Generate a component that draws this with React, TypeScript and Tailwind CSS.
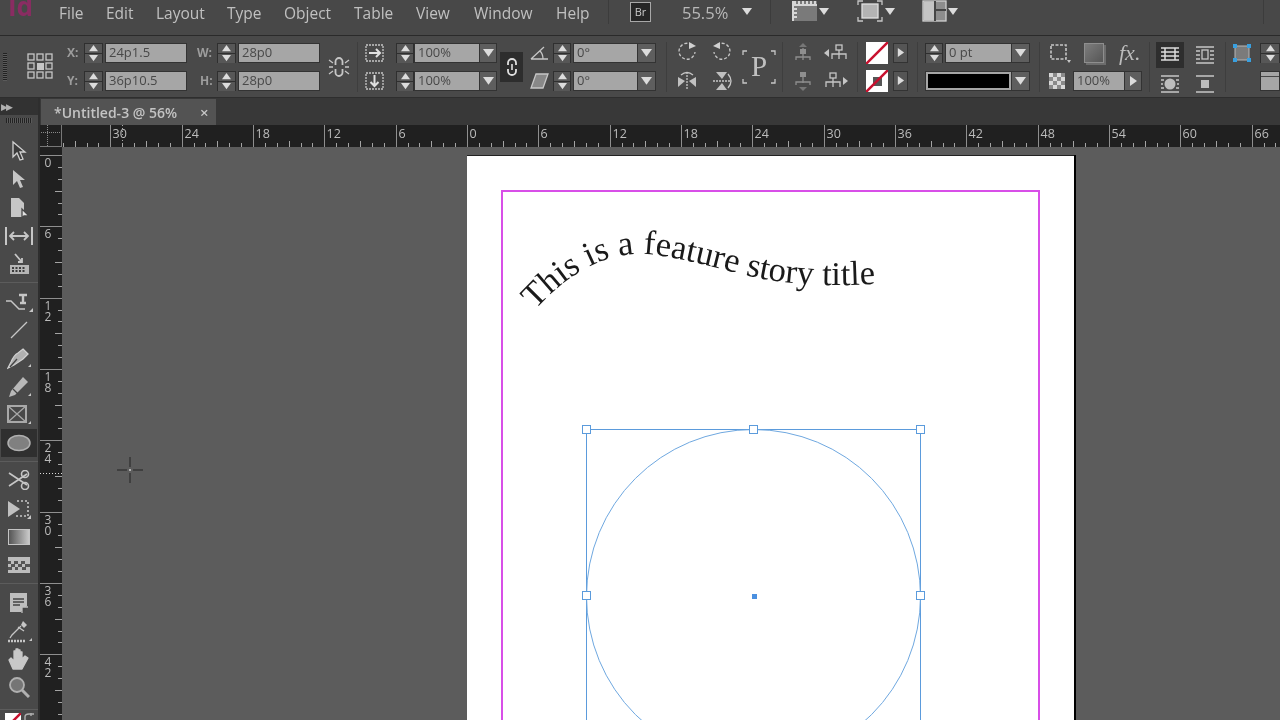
import React from 'react';

const ICON = '#c6c6c6';

const Tri = ({ dir = 'down', size = 10, color = '#dcdcdc' }: { dir?: string; size?: number; color?: string }) => {
  const pts = dir === 'down' ? '0,1 10,1 5,8' : dir === 'up' ? '0,8 10,8 5,1' : '2,0 9,5 2,10';
  return (
    <svg width={size} height={size} viewBox="0 0 10 10" className="block shrink-0">
      <polygon points={pts} fill={color} />
    </svg>
  );
};

const Spinner = ({ w = 'w-[19px]' }: { w?: string }) => (
  <div className={`${w} h-[20px] shrink-0 flex flex-col bg-[#2f2f2f] p-px gap-px`}>
    <div className="flex-1 bg-[#575757] flex items-center justify-center"><Tri dir="up" size={9} /></div>
    <div className="flex-1 bg-[#575757] flex items-center justify-center"><Tri size={9} /></div>
  </div>
);

const Field = ({ value, w }: { value: string; w: string }) => (
  <div className={`${w} h-[20px] shrink-0 bg-[#a6a6a6] border border-[#333] pl-[3px] text-[13px] leading-[17px] text-[#484848]`}>{value}</div>
);

const Drop = ({ w = 'w-[18px]' }: { w?: string }) => (
  <div className={`${w} h-[20px] shrink-0 bg-[#5e5e5e] border border-l-0 border-[#333] flex items-center justify-center`}><Tri size={11} /></div>
);

const Row = ({ children }: { children: React.ReactNode }) => <div className="flex items-center h-[20px]">{children}</div>;

const Segment = ({ className, children }: { className: string; children?: React.ReactNode }) => (
  <div className={`${className} shrink-0 flex flex-col justify-center gap-[8px] h-[50px] pt-[1px]`}>{children}</div>
);

const Ico = ({ w = 20, h = 20, className = '', children }: { w?: number; h?: number; className?: string; children: React.ReactNode }) => (
  <svg width={w} height={h} viewBox={`0 0 ${w} ${h}`} className={`block shrink-0 ${className}`} fill="none" stroke={ICON} strokeWidth="1.3">
    {children}
  </svg>
);

const MENU: [string, string][] = [
  ['File', 'w-[47px]'],
  ['Edit', 'w-[50px]'],
  ['Layout', 'w-[71px]'],
  ['Type', 'w-[57px]'],
  ['Object', 'w-[70px]'],
  ['Table', 'w-[62px]'],
  ['View', 'w-[58px]'],
  ['Window', 'w-[82px]'],
  ['Help', 'w-[52px]'],
];

const MenuBar = () => (
  <div className="relative h-[36px] shrink-0 flex items-start pl-[59px] bg-[#484848] border-b border-[#2a2a2a] text-[15.5px] text-[#c0c0c0]">
    <span className="absolute left-[8px] top-[-9px] text-[26px] font-bold leading-[30px] text-[#8a2c62]">Id</span>
    {MENU.map(([label, w]) => (
      <span key={label} className={`${w} leading-[26px] shrink-0`}>{label}</span>
    ))}
    <div className="w-px h-[24px] bg-[#3c3c3c]" />
    <div className="ml-[21px] mt-[2px] w-[21px] h-[20px] bg-[#262626] border border-[#a8a8a8] text-[11px] leading-[18px] text-center text-[#c8c8c8]">Br</div>
    <span className="ml-[31px] w-[48px] text-[16.5px] leading-[25px] text-[#b8b8b8]">55.5%</span>
    <div className="ml-[12px] mt-[7px]"><Tri size={10} /></div>
    <div className="ml-[18px] w-px h-[24px] bg-[#3c3c3c]" />
    <Ico w={26} h={22} className="ml-[21px]">
      <rect x="1" y="1" width="24" height="20" fill="#7a7a7a" stroke="none" />
      <path d="M1 5H25M1 1V21M3 1V5M7 1V5M11 1V5M15 1V5M19 1V5M23 1V5M1 9H5M1 13H5M1 17H5" stroke="#d6d6d6" strokeWidth="2" />
    </Ico>
    <div className="ml-[1px] mt-[7px]"><Tri size={10} /></div>
    <Ico w={26} h={22} className="ml-[28px]">
      <rect x="5" y="4" width="16" height="14" fill="#b4b4b4" stroke="#e0e0e0" />
      <path d="M1 5V1H6M20 1H25V5M25 17V21H20M6 21H1V17" />
    </Ico>
    <div className="ml-[2px] mt-[7px]"><Tri size={10} /></div>
    <Ico w={25} h={22} className="ml-[27px]">
      <rect x="1" y="1" width="23" height="20" fill="#8d8d8d" stroke="#d0d0d0" />
      <path d="M13 1V21M13 10H24" stroke="#454545" strokeWidth="2" />
      <rect x="2" y="2" width="10" height="18" fill="#c4c4c4" stroke="none" />
    </Ico>
    <div className="ml-[1px] mt-[7px]"><Tri size={10} /></div>
    <div className="ml-[305px] w-px h-[24px] bg-[#3c3c3c]" />
  </div>
);

const ControlBar = () => (
  <div className="h-[62px] shrink-0 flex items-center bg-[#494949] border-b border-[#2e2e2e] text-[#9d9d9d] text-[13px]">
    <div className="w-[60px] shrink-0 flex items-center pl-[3px]">
      <div className="w-[4px] h-[28px] bg-[repeating-linear-gradient(to_bottom,#222_0,#222_1px,#5a5a5a_1px,#5a5a5a_2px)]" />
      <Ico w={27} h={27} className="ml-[20px]">
        {[1, 10, 19].map((y) =>
          [1, 10, 19].map((x) =>
            x === 10 && y === 10 ? (
              <rect key={`${x}${y}`} x={x} y={y} width="7" height="7" fill="#c6c6c6" stroke="none" />
            ) : (
              <rect key={`${x}${y}`} x={x} y={y} width="6" height="6" />
            ),
          ),
        )}
      </Ico>
    </div>
    <Segment className="w-[127px]">
      <Row><span className="w-[24px] pl-[7px] font-bold text-[12px]">X:</span><Spinner /><div className="w-[2px]" /><Field value="24p1.5" w="w-[82px]" /></Row>
      <Row><span className="w-[24px] pl-[7px] font-bold text-[12px]">Y:</span><Spinner /><div className="w-[2px]" /><Field value="36p10.5" w="w-[82px]" /></Row>
    </Segment>
    <Segment className="w-[133px]">
      <Row><span className="w-[30px] pl-[10px] font-bold text-[12px]">W:</span><Spinner /><div className="w-[2px]" /><Field value="28p0" w="w-[82px]" /></Row>
      <Row><span className="w-[30px] pl-[13px] font-bold text-[12px]">H:</span><Spinner /><div className="w-[2px]" /><Field value="28p0" w="w-[82px]" /></Row>
    </Segment>
    <div className="w-[38px] h-[50px] shrink-0 flex items-center justify-center border-r border-[#3e3e3e]">
      <Ico w={22} h={22}>
        <path d="M7.5 9V5.5A3.5 3.5 0 0 1 14.5 5.5V9M7.5 13V16.5A3.5 3.5 0 0 0 14.5 16.5V13" strokeWidth="1.8" />
        <path d="M1 4L5 7M1 11H5M1 18L5 15M21 4L17 7M21 11H17M21 18L17 15" />
      </Ico>
    </div>
    <Segment className="w-[134px]">
      <Row>
        <Ico w={20} h={20} className="mr-[11px] ml-[7px]"><rect x="1" y="2" width="17" height="16" strokeDasharray="2 1" /><path d="M4 10H14M11 6L15 10L11 14" strokeWidth="2" stroke="#e0e0e0" /></Ico>
        <Spinner w="w-[18px]" /><div className="w-[2px]" /><Field value="100%" w="w-[66px]" /><Drop w="w-[17px]" />
      </Row>
      <Row>
        <Ico w={20} h={20} className="mr-[11px] ml-[7px]"><rect x="1" y="2" width="17" height="16" strokeDasharray="2 1" /><path d="M9.5 4V15M5.5 11L9.5 15L13.5 11" strokeWidth="2" stroke="#e0e0e0" /></Ico>
        <Spinner w="w-[18px]" /><div className="w-[2px]" /><Field value="100%" w="w-[66px]" /><Drop w="w-[17px]" />
      </Row>
    </Segment>
    <div className="w-[38px] shrink-0 pl-[8px]">
      <div className="w-[23px] h-[30px] bg-[#2d2d2d] flex items-center justify-center">
        <Ico w={12} h={20}><path d="M2 8V6A4 4 0 0 1 10 6V8M2 12V14A4 4 0 0 0 10 14V12" stroke="#e0e0e0" strokeWidth="1.8" /><path d="M6 7V13" stroke="#e0e0e0" strokeWidth="1.6" /></Ico>
      </div>
    </div>
    <Segment className="w-[126px]">
      <Row>
        <Ico w={19} h={16} className="mr-[4px]"><path d="M1 14H18M1 14L14 2M10 6Q13 9 13 14" /></Ico>
        <Spinner w="w-[18px]" /><div className="w-[2px]" /><Field value="0°" w="w-[65px]" /><Drop />
      </Row>
      <Row>
        <Ico w={19} h={16} className="mr-[4px]"><path d="M6 1H18L13 15H1Z" fill="#888" /></Ico>
        <Spinner w="w-[18px]" /><div className="w-[2px]" /><Field value="0°" w="w-[65px]" /><Drop />
      </Row>
    </Segment>
    <div className="w-[11px] h-[50px] shrink-0 border-r border-[#3e3e3e]" />
    <div className="w-[115px] h-[56px] shrink-0 flex items-center pl-[10px]">
      <div className="grid grid-cols-2 gap-x-[15px] gap-y-[9px]">
        <Ico><path d="M15 3A8 8 0 1 0 18 10" strokeDasharray="3 2" /><polygon points="12,0 19,4 12,7" fill="#d0d0d0" stroke="none" /></Ico>
        <Ico><path d="M5 3A8 8 0 1 1 2 10" strokeDasharray="3 2" /><polygon points="8,0 1,4 8,7" fill="#d0d0d0" stroke="none" /></Ico>
        <Ico><path d="M10 1V19" strokeDasharray="2 1" /><polygon points="1,6 8,10 1,16" fill="#c0c0c0" stroke="none" /><polygon points="19,6 12,10 19,16" fill="#c0c0c0" stroke="none" /><path d="M4 4Q10 -1 16 4" /></Ico>
        <Ico><path d="M1 10H19" strokeDasharray="2 1" /><polygon points="4,1 15,1 10,8" fill="#c0c0c0" stroke="none" /><polygon points="4,19 15,19 10,12" fill="#c0c0c0" stroke="none" /><path d="M16 3Q22 10 16 17" /></Ico>
      </div>
      <div className="relative ml-[10px] w-[34px] h-[36px] flex items-center justify-center">
        <Ico w={34} h={36} className="absolute inset-0"><path d="M1 6V2H5M29 2H33V6M33 30V34H29M5 34H1V30" /></Ico>
        <span className="font-['Liberation_Serif',serif] text-[29px] leading-none text-[#c0c0c0]">P</span>
      </div>
    </div>
    <div className="w-[76px] h-[50px] shrink-0 flex items-center pl-[10px] border-l border-r border-[#3e3e3e]">
      <div className="grid grid-cols-[20px_26px] gap-x-[10px] gap-y-[8px]">
        <Ico><polygon points="10,0 14,4 6,4" fill="#777" stroke="none" /><path d="M10 5V14M3 17V14H17V17M10 14V17" stroke="#8f8f8f" /><rect x="7" y="6" width="6" height="5" fill="#8f8f8f" stroke="none" /></Ico>
        <Ico w={26}><polygon points="1,10 6,6 6,14" fill="#c6c6c6" stroke="none" /><path d="M16 7V11M9 16V11H23V16M16 11V16" /><rect x="13" y="2" width="6" height="5" /></Ico>
        <Ico><polygon points="10,20 14,16 6,16" fill="#777" stroke="none" /><path d="M10 4V12M3 14V11H17V14" stroke="#8f8f8f" /><rect x="7" y="1" width="6" height="5" fill="#8f8f8f" stroke="none" /></Ico>
        <Ico w={26}><polygon points="25,10 20,6 20,14" fill="#c6c6c6" stroke="none" /><path d="M10 7V11M3 16V11H17V16M10 11V16" /><rect x="7" y="2" width="6" height="5" /></Ico>
      </div>
    </div>
    <div className="w-[60px] h-[50px] shrink-0 flex flex-col justify-center gap-[6px] pl-[8px] border-r border-[#3e3e3e]">
      {[0, 1].map((i) => (
        <div key={i} className="flex items-center">
          <svg width="22" height="22" viewBox="0 0 22 22" className="block shrink-0">
            <rect width="22" height="22" fill="#ffffff" />
            {i === 1 && <rect x="7" y="7" width="9" height="9" fill="#555" />}
            <path d="M0 22L22 0" stroke="#c8102e" strokeWidth="2.5" />
          </svg>
          <div className="ml-[5px] w-[15px] h-[20px] bg-[#555] border border-[#333] flex items-center justify-center"><Tri dir="right" size={9} /></div>
        </div>
      ))}
    </div>
    <Segment className="w-[122px] pl-[7px] border-r border-[#3e3e3e]">
      <Row><Spinner w="w-[18px]" /><div className="w-[2px]" /><Field value="0 pt" w="w-[67px]" /><Drop /></Row>
      <Row>
        <div className="w-[87px] h-[20px] bg-[#a6a6a6] border border-[#333] p-[2px]"><div className="h-full w-[81px] bg-black" /></div>
        <Drop />
      </Row>
    </Segment>
    <div className="w-[110px] h-[50px] shrink-0 flex flex-col justify-center gap-[8px] pl-[9px] border-r border-[#3e3e3e]">
      <div className="flex items-center h-[20px]">
        <Ico w={22} h={20}><rect x="2" y="2" width="15" height="14" strokeDasharray="3 1.5" strokeWidth="1.6" /><polygon points="18,17 22,17 20,20" fill="#c6c6c6" stroke="none" /></Ico>
        <div className="ml-[13px] w-[20px] h-[20px] bg-[linear-gradient(135deg,#7d7d7d,#565656)] border border-[#8e8e8e] shadow-[2px_2px_0_#6c6c6c]" />
        <span className="ml-[15px] font-['Liberation_Serif',serif] italic text-[22px] leading-none text-[#bcbcbc]">fx.</span>
      </div>
      <div className="flex items-center h-[20px]">
        <svg width="16" height="16" viewBox="0 0 4 4" className="block shrink-0">
          <rect width="4" height="4" fill="#d8d8d8" />
          <path d="M1 0H2V1H1ZM3 0H4V1H3ZM0 1H1V2H0ZM2 1H3V2H2ZM1 2H2V3H1ZM3 2H4V3H3ZM0 3H1V4H0ZM2 3H3V4H2Z" fill="#8a8a8a" />
        </svg>
        <div className="ml-[8px] w-[52px] h-[20px] bg-[#a6a6a6] border border-[#333] pl-[3px] text-[13px] leading-[17px] text-[#484848]">100%</div>
        <div className="w-[17px] h-[20px] bg-[#5e5e5e] border border-l-0 border-[#333] flex items-center justify-center"><Tri dir="right" size={10} /></div>
      </div>
    </div>
    <div className="w-[76px] h-[50px] shrink-0 grid grid-cols-[28px_20px] gap-x-[11px] gap-y-[7px] pl-[6px] items-center border-r border-[#3e3e3e]">
      <div className="h-[26px] bg-[#2e2e2e] flex items-center justify-center">
        <Ico w={20} h={18}><path d="M1 2H19M1 6H19M1 10H19M1 14H19M5 2V14M15 2V14" strokeWidth="1.5" stroke="#dcdcdc" /></Ico>
      </div>
      <Ico h={18}><path d="M1 1H19M1 17H19M1 5H5M1 9H5M1 13H5M15 5H19M15 9H19M15 13H19" /><rect x="7" y="4" width="6" height="9" /></Ico>
      <div className="flex justify-center">
        <Ico h={18}><path d="M1 1H19M1 17H19M1 5H4M1 9H3M1 13H4M16 5H19M17 9H19M16 13H19" /><circle cx="10" cy="9" r="5.5" fill="#bdbdbd" stroke="none" /></Ico>
      </div>
      <Ico h={18}><path d="M1 1H19M1 17H19" strokeWidth="1.6" /><rect x="6" y="5" width="8" height="8" fill="#bdbdbd" stroke="none" /></Ico>
    </div>
    <div className="flex-1 flex flex-col justify-center gap-[8px] pl-[6px]">
      <div className="flex items-center h-[20px]">
        <svg width="20" height="20" viewBox="0 0 20 20" className="block shrink-0">
          <rect x="3" y="3" width="14" height="14" fill="#7b7b7b" stroke="#b8b8b8" />
          {[[1, 1], [15, 1], [1, 15], [15, 15]].map(([x, y]) => <rect key={`${x}-${y}`} x={x} y={y} width="4" height="4" fill="#39a0e0" />)}
        </svg>
        <div className="ml-[8px]"><Spinner w="w-[20px]" /></div>
      </div>
      <div className="flex items-center h-[20px] pl-[28px]">
        <div className="w-[20px] h-[20px] bg-[#a6a6a6] border border-[#333] pt-[4px]"><div className="h-[1px] bg-[#484848]" /></div>
      </div>
    </div>
  </div>
);

const TOOLS: (React.ReactNode | null)[] = [
  <Ico w={18} h={22}><path d="M3 2V17L7 13L10 20L13 19L10 12H15Z" fill="#3a3a3a" stroke="#d0d0d0" /></Ico>,
  <Ico w={18} h={22}><path d="M3 2V17L7 13L10 20L13 19L10 12H15Z" fill="#c6c6c6" stroke="none" /></Ico>,
  <Ico w={20} h={22}><path d="M2 1H10L15 6V20H2Z" fill="#c6c6c6" stroke="none" /><path d="M13 12V21L15 19L20 19Z" fill="#e2e2e2" stroke="#484848" /></Ico>,
  <Ico w={28} h={20}><path d="M1 1V19M27 1V19" strokeWidth="2" /><path d="M5 10H23M9 6L5 10L9 14M19 6L23 10L19 14" strokeWidth="1.8" /></Ico>,
  <Ico w={24} h={24}><path d="M2 13H3V22H22V13" fill="#b5b5b5" stroke="none" /><path d="M5 16H19M5 19H19" stroke="#3c3c3c" strokeDasharray="2 1.5" strokeWidth="2" /><path d="M8 2L14 9M11 10H15V6" strokeWidth="1.8" /></Ico>,
  null,
  <Ico w={28} h={22}><path d="M1 10H6L14 18H20" strokeWidth="1.4" /><path d="M14 4H22M18 4V12M15 12H21" strokeWidth="2.4" /><polygon points="24,21 28,21 28,17" fill="#c6c6c6" stroke="none" /></Ico>,
  <Ico w={20} h={20}><path d="M2 18L18 2" /></Ico>,
  <Ico w={24} h={24}><path d="M16 3L21 8L16 13L7 19L1 22L4 16Q7 9 11 7Z" fill="#b0b0b0" stroke="#d0d0d0" /><path d="M3 21L10 13" stroke="#444" /><polygon points="21,21 24,21 24,18" fill="#c6c6c6" stroke="none" /></Ico>,
  <Ico w={24} h={24}><path d="M16 2L21 7L8 20L2 22L4 16Z" fill="#b8b8b8" stroke="none" /><path d="M6 14L12 20" stroke="#444" /><polygon points="21,21 24,21 24,18" fill="#c6c6c6" stroke="none" /></Ico>,
  <Ico w={24} h={22}><rect x="1" y="2" width="18" height="16" stroke="#a8a8a8" strokeWidth="2" /><path d="M1 2L19 18M19 2L1 18" stroke="#a8a8a8" /><polygon points="21,20 24,20 24,17" fill="#c6c6c6" stroke="none" /></Ico>,
  'ellipse',
  null,
  <Ico w={24} h={20}><path d="M2 3L20 15M2 16L20 4" strokeWidth="1.6" /><circle cx="18" cy="4" r="3.5" strokeWidth="1.6" /><circle cx="18" cy="16" r="3.5" strokeWidth="1.6" /></Ico>,
  <Ico w={24} h={22}><polygon points="1,3 1,19 13,11" fill="#c0c0c0" stroke="none" /><path d="M10 3H21V18H8" strokeDasharray="2 2" strokeWidth="1.6" /><polygon points="20,21 24,21 24,17" fill="#c6c6c6" stroke="none" /></Ico>,
  <div className="w-[22px] h-[16px] border border-[#c4c4c4] bg-[linear-gradient(to_right,#555,#c8c8c8)]" />,
  <svg width="22" height="16" viewBox="0 0 22 16" className="block shrink-0">
    <rect width="22" height="16" fill="#bcbcbc" />
    <path d="M0 4H3V7H0ZM6 4H10V7H6ZM13 4H17V7H13ZM0 10H4V13H0ZM7 10H10V13H7ZM14 10H18V13H14ZM3 7H7V10H3ZM10 7H14V10H10ZM17 7H22V10H17Z" fill="#555" />
  </svg>,
  null,
  <Ico w={20} h={22}><path d="M1 1H18V14L12 20H1Z" fill="#bdbdbd" stroke="none" /><path d="M4 7H15M4 10H15M4 13H11" stroke="#444" /><path d="M13 21V15H19" fill="#444" stroke="#bdbdbd" /></Ico>,
  <Ico w={26} h={24}><path d="M17 2L21 6L18 9L15 6Z" fill="#c6c6c6" stroke="none" /><path d="M15 7L6 16L4 19" /><path d="M12 8L18 12" /><path d="M2 22H20" stroke="#c6c6c6" strokeDasharray="2 1" strokeWidth="2.6" /><polygon points="23,22 26,22 26,19" fill="#c6c6c6" stroke="none" /></Ico>,
  <Ico w={24} h={24}><path d="M6 22L2 13L4 11L7 14V4H9V11V2H11V11V3H13V11V5H15V12L18 9L21 11L15 22Z" fill="#c8c8c8" stroke="#c8c8c8" strokeLinejoin="round" /></Ico>,
  <Ico w={22} h={22}><circle cx="9" cy="9" r="7" fill="#757575" stroke="#b0b0b0" strokeWidth="1.8" /><path d="M14 14L21 21" strokeWidth="3" stroke="#b0b0b0" /></Ico>,
];

const Tools = () => (
  <div className="w-[40px] shrink-0 h-full flex flex-col bg-[#494949] border-r-2 border-[#2e2e2e] overflow-hidden">
    <div className="h-[17px] shrink-0 bg-[#323232] flex items-center pl-[1px]">
      <span className="text-[9px] leading-none text-[#b0b0b0] tracking-[-2px]">▶▶</span>
    </div>
    <div className="h-[17px] shrink-0 flex justify-center pt-[3px]">
      <div className="w-[26px] h-[5px] bg-[repeating-linear-gradient(to_right,#222_0,#222_1px,#5a5a5a_1px,#5a5a5a_2px)]" />
    </div>
    <div className="h-[5px] shrink-0" />
    {TOOLS.map((tool, i) =>
      tool === null ? (
        <div key={i} className="h-[1px] shrink-0 my-[4px] bg-[#5c5c5c]" />
      ) : tool === 'ellipse' ? (
        <div key={i} className="h-[28.3px] shrink-0 flex items-center justify-center mx-[1px] bg-[#2f2f2f]">
          <svg width="24" height="18" viewBox="0 0 24 18" className="block">
            <ellipse cx="12" cy="9" rx="11" ry="7.5" fill="#808080" stroke="#b0b0b0" strokeWidth="1.5" />
          </svg>
        </div>
      ) : (
        <div key={i} className="h-[28.3px] shrink-0 flex items-center justify-center">{tool}</div>
      ),
    )}
    <div className="mt-[7px] h-px shrink-0 bg-[#5c5c5c]" />
    <div className="flex pl-[5px] pt-[3px]">
      <svg width="16" height="16" viewBox="0 0 16 16" className="block shrink-0">
        <rect width="16" height="16" fill="#ffffff" />
        <path d="M0 16L16 0" stroke="#c8102e" strokeWidth="2.5" />
      </svg>
      <svg width="12" height="10" viewBox="0 0 12 10" className="block shrink-0 ml-[2px]"><path d="M2 9V4Q2 1 6 1H11M8 0V3" fill="none" stroke="#b0b0b0" strokeWidth="1.4" /></svg>
    </div>
  </div>
);

const UNIT = 71.33 / 6;
const HTICKS = Array.from({ length: 106 }, (_, i) => i - 34);

const HRuler = () => (
  <div className="h-[22px] shrink-0 flex bg-[#202020]">
    <div className="w-[22px] h-[22px] shrink-0 relative border-r border-b border-[#777]">
      <div className="absolute left-[1px] right-[1px] top-[7px] border-t border-dotted border-[#8a8a8a]" />
      <div className="absolute top-0 bottom-0 left-[7px] border-l border-dotted border-[#8a8a8a]" />
    </div>
    <svg width="1218" height="22" viewBox="0 0 1218 22" className="block shrink-0">
      {HTICKS.map((u) => {
        const x = Math.round(405 + u * UNIT) + 0.5;
        if (u % 6 === 0) {
          return (
            <g key={u}>
              <path d={`M${x} 0V22`} stroke="#8f8f8f" />
              <text x={x + 2} y="13" fontSize="12.5" fill="#bcbcbc" fontFamily="'Open Sans', sans-serif">{Math.abs(u)}</text>
            </g>
          );
        }
        return <path key={u} d={`M${x} ${u % 3 === 0 ? 16 : 18}V22`} stroke="#a4a4a4" />;
      })}
      <path d="M60.5 0V22" stroke="#a8a8a8" strokeDasharray="1 2" />
    </svg>
  </div>
);

const VTICKS = Array.from({ length: 48 }, (_, i) => i);

const VRuler = () => (
  <svg width="22" height="573" viewBox="0 0 22 573" className="block shrink-0 bg-[#202020]">
    {VTICKS.map((u) => {
      const y = Math.round(8 + u * UNIT) + 0.5;
      if (u % 6 === 0) {
        return (
          <g key={u}>
            <path d={`M0 ${y}H22`} stroke="#8f8f8f" />
            <text
              x="8"
              y={y - 2}
              fontSize="12"
              letterSpacing="-6"
              fill="#bcbcbc"
              fontFamily="'Open Sans', sans-serif"
              style={{ writingMode: 'vertical-rl', textOrientation: 'upright' }}
            >
              {u}
            </text>
          </g>
        );
      }
      return <path key={u} d={`M${u % 3 === 0 ? 15 : 18} ${y}H22`} stroke="#a4a4a4" />;
    })}
    <path d="M0 326.5H22" stroke="#dcdcdc" strokeDasharray="1 2" />
  </svg>
);

const Handle = ({ className }: { className: string }) => (
  <div className={`absolute w-[9px] h-[9px] bg-white border border-[#5b9bdc] ${className}`} />
);

const Page = () => (
  <div className="relative ml-[405px] mt-[8px] w-[607px] h-[600px] shrink-0 bg-white border-t border-[#222] shadow-[2px_0_0_#000]">
    {/* margin guides */}
    <div className="absolute left-[34px] top-[34px] w-[539px] h-[600px] border-2 border-[#d84fe8] border-b-0" />
    {/* curved headline */}
    <svg width="440" height="120" viewBox="0 0 440 120" className="absolute left-[52px] top-[55px] overflow-visible">
      <path id="headline" d="M16 99 C 55 56, 95 38, 136 44 C 180 50, 220 64, 250 69 S 330 78, 400 68" fill="none" />
      <text fontFamily="'Liberation Serif', serif" fontSize="34.5" fill="#1a1a1a">
        <textPath href="#headline">This is a feature story title</textPath>
      </text>
    </svg>
    {/* selected ellipse frame */}
    <div className="absolute left-[119px] top-[273px] w-[335px] h-[340px] border border-[#5b9bdc]">
      <div className="absolute left-[-1px] top-[-1px] w-[335px] h-[335px] rounded-full border border-[#6fa8e0]" />
      <Handle className="left-[-5px] top-[-5px]" />
      <Handle className="left-[162px] top-[-5px]" />
      <Handle className="right-[-5px] top-[-5px]" />
      <Handle className="left-[-5px] top-[161px]" />
      <Handle className="right-[-5px] top-[161px]" />
      <div className="absolute left-[165px] top-[164px] w-[5px] h-[5px] bg-[#4a90e0]" />
    </div>
  </div>
);

export default function App() {
  return (
    <div className="w-[1280px] h-[720px] overflow-hidden flex flex-col bg-[#5c5c5c] font-['Open_Sans',sans-serif] blur-[0.4px]">
      <MenuBar />
      <ControlBar />
      <div className="flex-1 min-h-0 flex">
        <Tools />
        <div className="flex-1 min-w-0 flex flex-col">
          <div className="h-[27px] shrink-0 bg-[#383838] flex items-end">
            <div className="w-[175px] h-[26px] ml-[1px] bg-[#535353] flex items-center pl-[13px] text-[14px] font-semibold text-[#c4c4c4]">
              <span className="w-[146px]">*Untitled-3 @ 56%</span>
              <span className="text-[15px] leading-none text-[#c8c8c8]">×</span>
            </div>
          </div>
          <HRuler />
          <div className="relative flex-1 min-h-0 flex overflow-hidden">
            <VRuler />
            <Page />
            <svg width="28" height="28" viewBox="0 0 28 28" className="absolute left-[76px] top-[309px]">
              <path d="M14 1V11M14 17V27M1 14H11M17 14H27" stroke="#222" />
              <circle cx="14" cy="14" r="1" fill="#ccc" />
            </svg>
          </div>
        </div>
      </div>
    </div>
  );
}
